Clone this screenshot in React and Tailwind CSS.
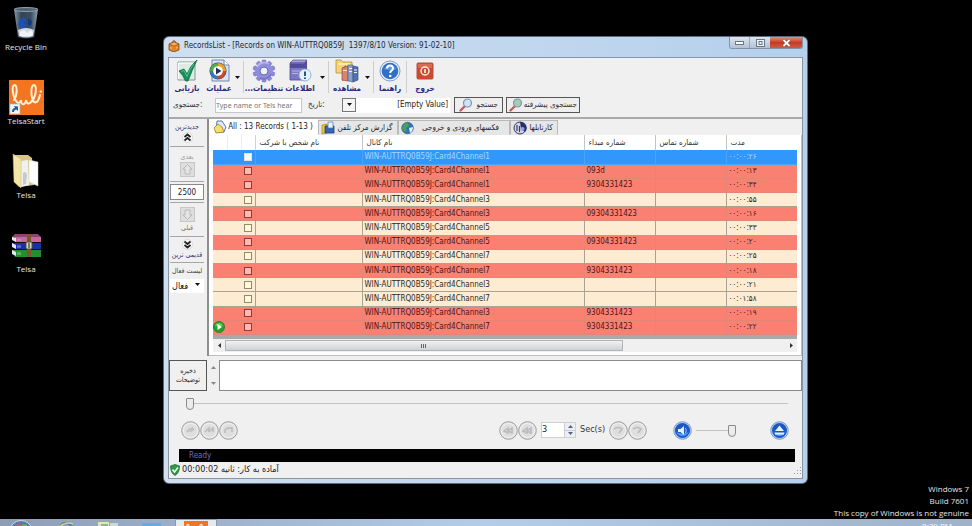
import React from "react";

const CHANNEL = "WIN-AUTTRQ0B59J:Card4Channel";

const records = [
  { kind: "selected", channel: "1", number: "", duration: "۰۰:۰۰:۲۶" },
  { kind: "red", channel: "1", number: "093d", duration: "۰۰:۰۰:۱۳" },
  { kind: "red", channel: "1", number: "9304331423", duration: "۰۰:۰۰:۳۴" },
  { kind: "cream", channel: "3", number: "", duration: "۰۰:۰۰:۵۵" },
  { kind: "red", channel: "3", number: "09304331423", duration: "۰۰:۰۰:۱۶" },
  { kind: "cream", channel: "5", number: "", duration: "۰۰:۰۰:۳۳" },
  { kind: "red", channel: "5", number: "09304331423", duration: "۰۰:۰۰:۲۰" },
  { kind: "cream", channel: "7", number: "", duration: "۰۰:۰۰:۲۵" },
  { kind: "red", channel: "7", number: "9304331423", duration: "۰۰:۰۰:۱۸" },
  { kind: "cream", channel: "3", number: "", duration: "۰۰:۰۰:۲۱" },
  { kind: "cream", channel: "7", number: "", duration: "۰۰:۰۱:۵۸" },
  { kind: "red", channel: "3", number: "9304331423", duration: "۰۰:۰۰:۱۹" },
  { kind: "red", channel: "7", number: "9304331423", duration: "۰۰:۰۰:۲۲", playing: true },
];

const rowStyles = {
  selected: "bg-[#3297fd] text-[#a9d8ff]",
  red: "bg-[#fa8072] text-[#4a1712]",
  cream: "bg-[#feecd2] text-[#2b2925]",
};

const cellStyles = {
  selected: "border-[#4ba3fb]",
  red: "border-[#e2867a]",
  cream: "border-[#aaa294]",
};

const boxStyles = {
  selected: "border-[#d8e2ea] bg-[#fdfbf0]",
  red: "border-[#8f3a34] bg-[#ffb9b0]",
  cream: "border-[#8f8c6c] bg-[#fff8dc]",
};

/* ---------- desktop icons ---------- */

function RecycleBinIcon() {
  return (
    <svg width="28" height="34" viewBox="0 0 28 34" aria-hidden="true">
      <defs>
        <linearGradient id="bin" x1="0" x2="1">
          <stop offset="0" stopColor="#8b9cab" />
          <stop offset=".3" stopColor="#324453" />
          <stop offset=".7" stopColor="#3b4e5e" />
          <stop offset="1" stopColor="#93a1ad" />
        </linearGradient>
      </defs>
      <path d="M2 3 L26 3 L22 31 Q14 34 6 31 Z" fill="url(#bin)" />
      <ellipse cx="14" cy="3.5" rx="12" ry="2" fill="#4f6373" stroke="#93a2ae" />
      <path d="M8 14 l4-3 2 3 -2 3 3 2 -2 4 -5 -1 -2-4z" fill="#1d4fb4" />
      <path d="M16 12 l4 3 -1 5 -3-1z" fill="#17377c" />
      <path d="M6 24 Q14 20 22 24 L21 30 Q14 33 7 30 Z" fill="#d4dbe0" />
      <path d="M8 26 l4-2 3 3 4-3 2 3 -1 3 H8z" fill="#f2f4f5" />
    </svg>
  );
}

function TelsaLogo({ size = 35, shortcut = true }) {
  return (
    <svg width={size} height={size} viewBox="0 0 35 35" aria-hidden="true">
      <rect width="35" height="35" fill="#f5741f" />
      <g fill="none" stroke="#fff0d8" strokeWidth="2" strokeLinecap="round">
        <path d="M5 20 C9 14 8 5 5.500 5 C2 6 4 18 8 22 Q10 25 12 20 Q12 25 15 24 Q17 23 17 20 Q18 25 21 23 C28 17 28 5 25 5 C21 6 22 18 25 22 Q29 24 31 15" />
        <path d="M31.500 11.500 h.6" />
      </g>
      {shortcut && (
        <g>
          <rect x="1" y="24" width="10" height="10" fill="#f2f6fa" stroke="#9fb0c0" strokeWidth=".6" />
          <path d="M3 32 Q3 28 6 28 L5 26 L9 26.500 L9 31 L7.500 29.500 Q5 29.500 5 32 Z" fill="#1d5aa5" />
        </g>
      )}
    </svg>
  );
}

function FolderIcon() {
  return (
    <svg width="28" height="36" viewBox="0 0 28 36" aria-hidden="true">
      <path d="M2 2 L16 2 L20 5 L22 32 L7 34 L2 28 Z" fill="#d9c77c" />
      <path d="M9 8 L16 7 L17 32 L9 34 Z" fill="#eef0f2" />
      <path d="M17 7 L26 9 L26 33 L17 29 Z" fill="#fdfdfd" stroke="#cfd3d6" strokeWidth=".5" />
      <path d="M1 1 L9 6 L9 35 L2 29 Z" fill="#f4e7ac" stroke="#c6b36a" strokeWidth=".5" />
      <path d="M11 20 q3 -3 4 2 l-1 9 -3 1z" fill="#c5c9cc" />
    </svg>
  );
}

function ArchiveIcon() {
  return (
    <svg width="31" height="25" viewBox="0 0 31 25" aria-hidden="true">
      <path d="M1 4 L4 1 H27 L30 4 V8 H4 Z" fill="#8d4470" />
      <path d="M4 4 H30 V9 H4 Z" fill="#c4689d" />
      <path d="M1 10 H30 V16 H4 Z" fill="#1b2fa8" />
      <path d="M1 17 H30 V24 H4 Z" fill="#1d9330" />
      <path d="M1 4 L5 5 V9 L1 7 Z M1 10 L5 12 V16 L1 14 Z M1 17 L5 19 V23 L1 21 Z" fill="#e8e4ec" />
      <path d="M5 9.500 H30 M5 16.500 H30" stroke="#111" strokeWidth="1" />
      <path d="M7 6 v2 M7 12 v3 M7 19 v3 M9 6 v2 M9 12 v3 M9 19 v3" stroke="#d9c9e0" strokeWidth=".7" />
      <rect x="16" y="1" width="4" height="23" fill="#7c5530" />
      <rect x="15" y="9" width="6" height="7" rx="1" fill="#d8d6d0" stroke="#5b4a33" />
      <path d="M18 10 v5" stroke="#555" strokeWidth="1.500" />
    </svg>
  );
}

/* ---------- toolbar icons, 24 x 24 ---------- */

function CheckPageIcon() {
  return (
    <svg width="24" height="24" viewBox="0 0 24 24" aria-hidden="true">
      <path d="M3 3 H20 V21 H3 Z" fill="#dcebe4" stroke="#7d9c90" />
      <path d="M3.500 20 V4 H19" fill="none" stroke="#fff" />
      <path d="M4 12 L9 10 L12 15 Q15 7 22 1 Q17 11 13 22 L10.500 22 Q8 16 4 12 Z" fill="#13905b" stroke="#0a6b42" strokeWidth=".8" />
      <path d="M6.500 12.500 L9 11.500 L12 17.500 Q15 9 19 5" fill="none" stroke="#66cf9d" strokeWidth=".8" />
    </svg>
  );
}

function MediaIcon() {
  return (
    <svg width="24" height="24" viewBox="0 0 24 24" aria-hidden="true">
      <path d="M5 1 H17 L22 6 V22 H5 Z" fill="#d8e4f5" stroke="#7388b2" />
      <path d="M17 1 V6 H22" fill="#fff" stroke="#7388b2" />
      <circle cx="11" cy="12" r="8.500" fill="#23446e" />
      <path d="M11 12 V4 A8 8 0 0 1 19 12 Z" fill="#e6a526" />
      <path d="M11 12 H19 A8 8 0 0 1 11 20 Z" fill="#c74a2b" />
      <path d="M11 12 V20 A8 8 0 0 1 3 12 Z" fill="#3779c4" />
      <path d="M11 12 H3 A8 8 0 0 1 11 4 Z" fill="#5bab40" />
      <circle cx="11" cy="12" r="4.800" fill="#fff" />
      <path d="M9 8.500 L14.500 12 L9 15.500 Z" fill="#20325c" />
    </svg>
  );
}

const gearTeeth = [0, 36, 72, 108, 144, 180, 216, 252, 288, 324];

function GearIcon() {
  return (
    <svg width="24" height="24" viewBox="0 0 24 24" aria-hidden="true">
      <g fill="#8d8bd8" stroke="#6967b8" strokeWidth=".5">
        {gearTeeth.map((a) => (
          <rect key={a} x="10" y="1" width="4" height="5" rx="1" transform={`rotate(${a} 12 12)`} />
        ))}
      </g>
      <circle cx="12" cy="12" r="8.800" fill="#8f8edb" />
      <path d="M5 8 A8 8 0 0 1 17 5" fill="none" stroke="#bdbcf0" strokeWidth="1.500" />
      <path d="M19 15 A8 8 0 0 1 8 19" fill="none" stroke="#7472c4" strokeWidth="1.500" />
      <circle cx="12" cy="12" r="4" fill="#efeff4" stroke="#6967b8" />
    </svg>
  );
}

function InfoIcon() {
  return (
    <svg width="24" height="24" viewBox="0 0 24 24" aria-hidden="true">
      <path d="M2 4 L5 1 H19 L16 4 Z" fill="#a7a3dd" stroke="#47418b" strokeWidth=".6" />
      <path d="M2 4 H16 V21 H2 Z" fill="#7d78c4" stroke="#4f4a94" strokeWidth=".8" />
      <path d="M16 4 L19 1 V18 L16 21 Z" fill="#544e9c" />
      <path d="M2 5 H16 V9 H2 Z" fill="#514b99" />
      <path d="M4 12 H12 M4 14.500 H10" stroke="#b9b5ea" />
      <circle cx="17" cy="16" r="6" fill="#e6f2fb" stroke="#8db4d6" />
      <path d="M17 12.500 V17 M17 18.500 V20" stroke="#20558e" strokeWidth="2" />
    </svg>
  );
}

function BooksIcon() {
  return (
    <svg width="26" height="24" viewBox="0 0 26 24" aria-hidden="true">
      <path d="M2 1 H7 L9 3 H18 V14 H2 Z" fill="#f3d479" stroke="#b58f33" strokeWidth=".8" />
      <path d="M4 5 H16" stroke="#fff0b8" strokeWidth="1.500" />
      <path d="M8 9 L12 6 V20 L8 22 Z" fill="#cf6a5a" />
      <path d="M8 9 L14 7 V22 L8 21 Z" fill="#d98470" stroke="#8a3b31" strokeWidth=".6" />
      <path d="M14 6 L19 6 V23 L14 22 Z" fill="#8f9fc4" stroke="#4d5d86" strokeWidth=".6" />
      <path d="M19 7 L24 8 V21 L19 23 Z" fill="#4e74b5" stroke="#2c4679" strokeWidth=".6" />
      <path d="M15 9.500 h3 M15 12.500 h3 M20 11 h3 M20 13.500 h3 M9 11.500 h4" stroke="#f1f3f9" strokeWidth="1" />
    </svg>
  );
}

function HelpIcon() {
  return (
    <svg width="22" height="24" viewBox="0 0 22 24" aria-hidden="true">
      <circle cx="11" cy="12" r="10" fill="#e8f0fb" stroke="#7f9fcb" />
      <circle cx="11" cy="12" r="8.300" fill="#2f6fc6" />
      <path d="M4 10 Q11 3 18 10 Q11 12 4 10" fill="#5a94de" />
      <path d="M8 9.500 Q8 6.500 11 6.500 Q14 6.500 14 9.300 Q14 11 12.300 11.900 Q11.200 12.500 11.200 14" fill="none" stroke="#fff" strokeWidth="2" />
      <circle cx="11.200" cy="17" r="1.300" fill="#fff" />
    </svg>
  );
}

function PowerIcon() {
  return (
    <svg width="18" height="24" viewBox="0 0 18 24" aria-hidden="true">
      <rect x="1" y="4" width="16" height="16" rx="1" fill="#d0482f" stroke="#b5523f" />
      <path d="M2 5 H16 V9 H2 Z" fill="#dd6a54" />
      <circle cx="9" cy="12" r="4" fill="none" stroke="#ffe9e2" strokeWidth="1.500" />
      <path d="M9 10 V14" stroke="#fff" strokeWidth="1.500" />
    </svg>
  );
}

/* ---------- small icons ---------- */

function BoxIcon() {
  return (
    <svg width="12" height="12" viewBox="0 0 12 12" aria-hidden="true">
      <path d="M1 4 L6 2 L11 4 V10 L6 12 L1 10 Z" fill="#e08427" stroke="#89460e" strokeWidth=".8" />
      <path d="M1 4 L6 6 L11 4 L6 2 Z" fill="#f4b264" stroke="#89460e" strokeWidth=".6" />
      <path d="M4 2.500 Q6 -1 8 2.500" fill="none" stroke="#89460e" />
      <path d="M3 7 V9 M8 8 L9.500 7.500" stroke="#ffd18a" />
    </svg>
  );
}

function MagnifierIcon({ tint = "#cfe3f6" }) {
  return (
    <svg width="14" height="14" viewBox="0 0 14 14" aria-hidden="true" className="shrink-0">
      <path d="M6 8 L1.500 12.500" stroke="#c45a64" strokeWidth="2.400" strokeLinecap="round" />
      <circle cx="8.500" cy="5" r="4" fill={tint} stroke="#7f93b3" strokeWidth="1.200" />
    </svg>
  );
}

function FolderTabIcon() {
  return (
    <svg width="14" height="14" viewBox="0 0 14 14" aria-hidden="true">
      <path d="M4 1 L9 1 L13 7 L11 12 L3 12 Z" fill="#dfe9fa" stroke="#36569f" strokeWidth=".8" />
      <path d="M1 8 L5 4 L9 7 L11 12 L3 13 Z" fill="#f6df6c" stroke="#9c7f20" strokeWidth=".8" />
    </svg>
  );
}

function PhoneReportIcon() {
  return (
    <svg width="14" height="14" viewBox="0 0 14 14" aria-hidden="true">
      <path d="M1 4 L6 3 V12 L1 13 Z" fill="#f0c63d" stroke="#9b7a1a" strokeWidth=".6" />
      <path d="M4 5 H13 V12 H4 Z" fill="#3567b7" stroke="#1e3f7d" strokeWidth=".8" />
      <path d="M7 1 H12 V7 H7 Z" fill="#eaf2fc" stroke="#4b75b5" strokeWidth=".7" />
    </svg>
  );
}

function GlobeIcon() {
  return (
    <svg width="13" height="14" viewBox="0 0 13 14" aria-hidden="true">
      <circle cx="6.500" cy="7" r="5.800" fill="#2b74b8" stroke="#1d4a7a" strokeWidth=".6" />
      <path d="M2 4 Q5 1 7 2 L8 5 L5 7 L6 11 Q3 11 1 8 Z" fill="#4da152" />
      <path d="M8 7 L12 6 Q12 10 9 12 Z" fill="#e5eef5" />
    </svg>
  );
}

function FilesIcon() {
  return (
    <svg width="14" height="14" viewBox="0 0 14 14" aria-hidden="true">
      <circle cx="7" cy="7" r="6" fill="#d4d6e6" stroke="#30375f" />
      <path d="M7 1 A6 6 0 0 1 12 11 L8 8 Z" fill="#27306c" />
      <path d="M4 4 V10 M6.500 5 V11" stroke="#433a58" strokeWidth="1.200" />
      <circle cx="9.500" cy="8" r="2" fill="#8fa5dd" />
    </svg>
  );
}

function DoubleChevron({ down = false }) {
  return (
    <svg width="11" height="11" viewBox="0 0 11 11" aria-hidden="true" className={down ? "rotate-180" : ""}>
      <circle cx="5.500" cy="5.500" r="5" fill="#fafafa" stroke="#c9c9c9" strokeWidth=".6" />
      <path d="M2.500 5 L5.500 2.500 L8.500 5 M2.500 8.500 L5.500 6 L8.500 8.500" fill="none" stroke="#222" strokeWidth="1.800" />
    </svg>
  );
}

function GhostArrow({ down = false }) {
  return (
    <svg width="15" height="15" viewBox="0 0 15 15" aria-hidden="true" className={down ? "rotate-180" : ""}>
      <rect x=".5" y=".5" width="14" height="14" fill="#dedede" stroke="#c6c6c6" />
      <path d="M7.500 2.500 L12 7 H10 V12 H5 V7 H3 Z" fill="#e4e4e4" stroke="#b0b0b0" strokeWidth=".8" />
    </svg>
  );
}

function PlayBadge() {
  return (
    <svg width="12" height="12" viewBox="0 0 12 12" aria-hidden="true">
      <circle cx="6" cy="6" r="5.600" fill="#27a02c" stroke="#167119" strokeWidth=".6" />
      <path d="M2 5 A4.200 4.200 0 0 1 10 5 Z" fill="#6fcb60" />
      <path d="M4.500 3 L9 6 L4.500 9 Z" fill="#fff" />
    </svg>
  );
}

function Caret({ className = "" }) {
  return (
    <svg width="5" height="3" viewBox="0 0 5 3" aria-hidden="true" className={className}>
      <path d="M0 0 H5 L2.500 3 Z" fill="currentColor" />
    </svg>
  );
}

const discGlyphs = {
  play: "M6 11 Q8 8 12 7 M9 11 L13 8",
  pause: "M5 11 L9 7 V11 M9 11 L13 7 V11",
  stop: "M6 12 V9 L9 7 H13 V11",
  back: "M5 10 L9 7 V12 Z M9 10 L13 7 V12 Z",
  forward: "M5 8 Q10 5 13 8 L10 12",
};

function DiscButton({ glyph, label }) {
  return (
    <button type="button" aria-label={label} className="h-[19px] w-[19px] rounded-full">
      <svg width="19" height="19" viewBox="0 0 19 19" aria-hidden="true">
        <circle cx="9.500" cy="9.500" r="8.800" fill="#e6e6e6" stroke="#9d9d9d" />
        <circle cx="9.500" cy="9.500" r="7" fill="#dedede" stroke="#f0f0f0" />
        <path d={discGlyphs[glyph]} fill="none" stroke="#bbbbbb" strokeWidth="1.500" />
      </svg>
    </button>
  );
}

function BlueDisc({ label, children }) {
  return (
    <button type="button" aria-label={label} className="h-[19px] w-[19px] rounded-full">
      <svg width="19" height="19" viewBox="0 0 19 19" aria-hidden="true">
        <circle cx="9.500" cy="9.500" r="8.800" fill="#b9d0ee" stroke="#7d9cc8" />
        <circle cx="9.500" cy="9.500" r="7.500" fill="#1d57c4" />
        <path d="M3.500 11 A6.500 6.500 0 0 0 15.500 11 Q10 14 3.500 11" fill="#4fa0ee" />
        {children}
      </svg>
    </button>
  );
}

/* ---------- building blocks ---------- */

function DesktopIcon({ label, children }) {
  return (
    <button type="button" className="flex h-[74px] w-13 flex-col items-center">
      <span className="flex h-9 items-center">{children}</span>
      <span className="leading-3 whitespace-nowrap text-[#e8e8e8]">{label}</span>
    </button>
  );
}

function Tool({ label, width, children }) {
  return (
    <button type="button" className={`flex ${width} shrink-0 flex-col items-center`}>
      {children}
      <span dir="rtl" className="text-[8px] leading-3 font-bold whitespace-nowrap text-[#28287c]">{label}</span>
    </button>
  );
}

function MenuArrow({ label }) {
  return (
    <button type="button" aria-label={label} className="flex h-9 w-2 shrink-0 items-center justify-center text-[#111]">
      <Caret />
    </button>
  );
}

function Separator() {
  return <span className="mx-[2px] h-8 w-px shrink-0 bg-[#cdcdcd]" />;
}

function Tab({ label, icon, width, active = false, rtl = true }) {
  const look = active
    ? "h-4 bg-white px-1"
    : "h-[15px] border border-[#b9b9b9] border-b-transparent bg-[#e6e6e6] px-[2px]";
  return (
    <button type="button" role="tab" aria-selected={active} className={`flex items-center text-[#222] ${look} ${width}`}>
      {icon}
      <span dir={rtl ? "rtl" : "ltr"} className="flex-1 text-center whitespace-nowrap">{label}</span>
    </button>
  );
}

const rangeStyle =
  "h-3 appearance-none bg-transparent " +
  "[&::-webkit-slider-runnable-track]:h-px [&::-webkit-slider-runnable-track]:bg-[#c2c2c2] " +
  "[&::-webkit-slider-thumb]:-mt-[5px] [&::-webkit-slider-thumb]:h-3 [&::-webkit-slider-thumb]:w-2 [&::-webkit-slider-thumb]:appearance-none " +
  "[&::-webkit-slider-thumb]:rounded-t-[1px] [&::-webkit-slider-thumb]:rounded-b-[4px] [&::-webkit-slider-thumb]:border [&::-webkit-slider-thumb]:border-[#8b8b8b] [&::-webkit-slider-thumb]:bg-[#ececec]";

function TitleBar() {
  return (
    <header className="flex h-5 items-start">
      <div className="flex h-[18px] min-w-0 flex-1 items-center gap-1 font-['DejaVu_Sans_Condensed','DejaVu_Sans',sans-serif] text-[8px] text-[#1d2733]">
        <BoxIcon />
        <h1 className="whitespace-pre">RecordsList - [Records on WIN-AUTTRQ0859J  1397/8/10 Version: 91-02-10]</h1>
      </div>
      <div className="flex h-3 overflow-hidden rounded-b-[3px] border border-t-0 border-[#8493a5] text-[#6a7683]">
        <button type="button" aria-label="Minimize" className="flex w-5 items-center justify-center border-r border-[#9aa8b8] bg-linear-to-b from-[#dde6f0] to-[#b2c2d4]">
          <svg width="9" height="4" viewBox="0 0 9 4" aria-hidden="true">
            <rect x=".5" y=".5" width="8" height="3" fill="#fff" stroke="currentColor" />
          </svg>
        </button>
        <button type="button" aria-label="Maximize" className="flex w-5 items-center justify-center bg-linear-to-b from-[#dde6f0] to-[#b2c2d4]">
          <svg width="9" height="8" viewBox="0 0 9 8" aria-hidden="true">
            <rect x=".5" y=".5" width="8" height="7" fill="#eef2f6" stroke="currentColor" />
            <rect x="3" y="2.500" width="3" height="3" fill="none" stroke="currentColor" />
          </svg>
        </button>
        <button type="button" aria-label="Close" className="flex w-8 items-center justify-center bg-linear-to-b from-[#dc8f80] via-[#c43b25] to-[#cc5a45]">
          <svg width="9" height="8" viewBox="0 0 9 8" aria-hidden="true">
            <path d="M1.500 1 L7.500 7 M7.500 1 L1.500 7" stroke="#8c4136" strokeWidth="3" />
            <path d="M1.500 1 L7.500 7 M7.500 1 L1.500 7" stroke="#fff" strokeWidth="1.800" />
          </svg>
        </button>
      </div>
    </header>
  );
}

function Toolbar() {
  return (
    <div role="toolbar" className="flex h-[38px] items-center">
      <Tool label="بازیابی" width="w-9"><CheckPageIcon /></Tool>
      <Tool label="عملیات" width="w-7"><MediaIcon /></Tool>
      <MenuArrow label="Operations menu" />
      <Separator />
      <Tool label="تنظیمات..." width="w-9"><GearIcon /></Tool>
      <Tool label="اطلاعات" width="w-9"><InfoIcon /></Tool>
      <MenuArrow label="Information menu" />
      <Separator />
      <Tool label="مشاهده" width="w-8"><BooksIcon /></Tool>
      <MenuArrow label="View menu" />
      <Separator />
      <Tool label="راهنما" width="w-7"><HelpIcon /></Tool>
      <Separator />
      <Tool label="خروج" width="w-8"><PowerIcon /></Tool>
    </div>
  );
}

function SearchBar() {
  return (
    <form className="flex h-[23px] items-center border-b-2 border-[#a9a9a9] pb-[3px] text-[#333]" onSubmit={(e) => e.preventDefault()}>
      <label htmlFor="query" className="w-[46px] pl-1 whitespace-nowrap">جستجوی:</label>
      <input
        id="query"
        placeholder="Type name or Tels hear"
        className="h-[15px] w-[87px] border border-[#c4c8cc] bg-white font-['Noto_Sans',sans-serif] text-[7px] placeholder:text-[#777]"
      />
      <label htmlFor="date" className="w-10 pl-[6px] whitespace-nowrap">تاریخ:</label>
      <div className="relative">
        <select id="date" className="block h-[15px] w-[108px] appearance-none bg-white pr-[2px] pl-4 text-right text-[#222] [text-align-last:right]">
          <option>[Empty Value]</option>
        </select>
        <span className="pointer-events-none absolute top-0 left-0 flex h-[14px] w-[14px] items-center justify-center border border-[#777] bg-[#f4f4f4] text-[#111]">
          <Caret />
        </span>
      </div>
      <button type="submit" className="ml-1 flex h-4 w-[49px] items-center justify-between border border-[#555] bg-[#eee] px-1">
        <MagnifierIcon />
        <span className="whitespace-nowrap">جستجو</span>
      </button>
      <button type="button" className="ml-[3px] flex h-4 w-[74px] items-center justify-between border border-[#555] bg-[#eee] px-[2px]">
        <MagnifierIcon tint="#a5cdb1" />
        <span className="whitespace-nowrap">جستجوی پیشرفته</span>
      </button>
    </form>
  );
}

function SideBar() {
  const block = "flex flex-col items-center justify-center border-b border-[#a6a6a6]";
  return (
    <nav className="flex w-9 shrink-0 flex-col px-px text-[7px] leading-[10px] text-[#33336e]">
      <button type="button" className={`${block} h-[28px]`}>
        <span>جدیدترین</span>
        <DoubleChevron />
      </button>
      <button type="button" className={`${block} h-[35px] text-[#999]`}>
        <span>بعدی</span>
        <GhostArrow />
      </button>
      <div className={`${block} h-[21px]`}>
        <input aria-label="Page size" defaultValue="2500" className="h-4 w-full border border-[#888] bg-white text-center text-[8px] text-[#222]" />
      </div>
      <button type="button" className={`${block} h-[34px] gap-px text-[#777]`}>
        <GhostArrow down />
        <span>قبلی</span>
      </button>
      <button type="button" className={`${block} h-[26px]`}>
        <DoubleChevron down />
        <span className="whitespace-nowrap">قدیمی ترین</span>
      </button>
      <label htmlFor="active" className="flex h-4 items-center justify-center whitespace-nowrap text-[#444]">لیست فعال</label>
      <div className="relative text-[#111]">
        <select id="active" className="block h-[14px] w-full appearance-none bg-white pl-[2px] text-[9px]">
          <option>فعال</option>
        </select>
        <Caret className="pointer-events-none absolute top-1 right-1" />
      </div>
    </nav>
  );
}

function RecordsTable() {
  return (
    <table className="h-[200px] w-full table-fixed border-collapse text-left">
      <colgroup>
        <col className="w-[14px]" />
        <col className="w-[14px]" />
        <col className="w-[14px]" />
        <col className="w-[107px]" />
        <col />
        <col className="w-[71px]" />
        <col className="w-[71px]" />
        <col className="w-[71px]" />
      </colgroup>
      <thead>
        <tr className="h-[15px] bg-white text-[#333]">
          <th aria-label="State" className="border-r border-[#ececec]" />
          <th aria-label="Flag" className="border-r border-[#ececec]" />
          <th aria-label="Select" className="border-r border-[#d0d0d0]" />
          {["نام شخص با شرکت", "نام کانال", "شماره مبداء", "شماره تماس", "مدت"].map((h) => (
            <th key={h} className="border-l border-[#c4c4c4] px-1 font-normal whitespace-nowrap">{h}</th>
          ))}
        </tr>
      </thead>
      <tbody>
        {records.map((r, i) => {
          const line = `border-b ${cellStyles[r.kind]}`;
          const cell = `border-b border-l px-[2px] whitespace-nowrap ${cellStyles[r.kind]}`;
          return (
            <tr key={i} className={`h-[14px] leading-3 ${rowStyles[r.kind]}`}>
              <td className={line}>{r.playing && <PlayBadge />}</td>
              <td className={line} />
              <td className={line}>
                <input
                  type="checkbox"
                  aria-label={`Select record ${i + 1}`}
                  className={`mx-auto block h-2 w-2 appearance-none border ${boxStyles[r.kind]}`}
                />
              </td>
              <td className={cell} />
              <td className={cell}>{CHANNEL + r.channel}</td>
              <td className={cell}>{r.number}</td>
              <td className={cell} />
              <td className={cell}>{r.duration}</td>
            </tr>
          );
        })}
      </tbody>
    </table>
  );
}

function HorizontalScroll() {
  return (
    <div className="flex h-[13px] items-center bg-[#f0f0f0] text-[#333]">
      <button type="button" aria-label="Scroll left" className="flex w-3 justify-center"><Caret className="rotate-90" /></button>
      <div className="flex-1">
        <div className="flex h-[11px] w-[71%] items-center justify-center gap-px border border-[#b4b4b4] bg-linear-to-b from-[#f2f2f2] to-[#cfd2d5]">
          <span className="h-1 w-px bg-[#666]" />
          <span className="h-1 w-px bg-[#666]" />
          <span className="h-1 w-px bg-[#666]" />
        </div>
      </div>
      <button type="button" aria-label="Scroll right" className="flex w-3 justify-center"><Caret className="-rotate-90" /></button>
    </div>
  );
}

function Player() {
  return (
    <section aria-label="Player">
      <div className="flex h-[25px] items-center pr-[14px] pl-[17px]">
        <input type="range" aria-label="Position" defaultValue="0" className={`w-full ${rangeStyle}`} />
      </div>
      <div className="flex h-7 items-center pr-[13px] pl-3">
        <DiscButton glyph="play" label="Play" />
        <DiscButton glyph="pause" label="Pause" />
        <DiscButton glyph="stop" label="Stop" />
        <div className="ml-auto flex items-center">
          <DiscButton glyph="back" label="Previous" />
          <DiscButton glyph="back" label="Rewind" />
          <div className="ml-1 flex h-4 w-[35px] border border-[#d0d0d0] bg-white text-[9px] text-[#222]">
            <input id="step" inputMode="numeric" defaultValue="3" className="w-[22px] min-w-0 bg-transparent" />
            <div className="flex flex-1 flex-col justify-around border-l border-[#c9ccd2] bg-[#eceef2] text-[#55617c]">
              <button type="button" aria-label="Increase step" className="flex flex-1 items-center justify-center border-b border-[#c9ccd2]"><Caret className="rotate-180" /></button>
              <button type="button" aria-label="Decrease step" className="flex flex-1 items-center justify-center"><Caret /></button>
            </div>
          </div>
          <label htmlFor="step" className="w-[33px] pl-1 text-[9px] text-[#333]">Sec(s)</label>
          <DiscButton glyph="forward" label="Forward" />
          <DiscButton glyph="forward" label="Next" />
        </div>
        <div className="ml-[26px] flex items-center">
          <BlueDisc label="Mute">
            <path d="M5 8 H7.500 L11 5 V14 L7.500 11 H5 Z" fill="#e4f1ff" />
            <path d="M12.500 7 Q14 9.500 12.500 12" fill="none" stroke="#9fcbff" />
          </BlueDisc>
        </div>
        <input type="range" aria-label="Volume" defaultValue="100" className={`ml-1 w-10 ${rangeStyle}`} />
        <div className="ml-[34px] flex">
          <BlueDisc label="Eject">
            <path d="M9.500 4.500 L14 10 H5 Z M5 11.500 H14 V13.500 H5 Z" fill="#e4f1ff" />
          </BlueDisc>
        </div>
      </div>
    </section>
  );
}

function RecordsWindow() {
  return (
    <main className="absolute top-9 right-[164px] left-[163px] overflow-hidden rounded-md border border-[#5b6b7d] bg-linear-to-r from-[#cfdff0] to-[#b5d0ec] px-1 pb-1">
      <TitleBar />
      <div className="border border-[#8795a5] bg-[#f0f0f0] font-['DejaVu_Sans_Condensed','DejaVu_Sans',sans-serif] text-[8px]">
        <Toolbar />
        <SearchBar />
        <div className="flex">
          <SideBar />
          <section className="ml-[2px] min-w-0 flex-1 border-l-2 border-[#8f8f8f]">
            <div role="tablist" className="flex h-4 items-end">
              <Tab label="All : 13 Records ( 1-13 )" icon={<FolderTabIcon />} width="w-[109px]" active rtl={false} />
              <Tab label="گزارش مرکز تلفن" icon={<PhoneReportIcon />} width="w-20" />
              <Tab label="فکسهای ورودی و خروجی" icon={<GlobeIcon />} width="w-28" />
              <Tab label="کارتابلها" icon={<FilesIcon />} width="w-12" />
            </div>
            <div className="border-r border-b border-[#bdbdbd] bg-white pr-1 pb-[3px] pl-1">
              <RecordsTable />
              <div className="h-1 bg-[#a9a9a9]" />
              <HorizontalScroll />
            </div>
          </section>
        </div>
        <div className="mt-1 flex h-[31px]">
          <button type="button" className="w-[38px] border border-[#555] bg-[#f0f0f0] text-[7px] leading-[9px] text-[#222]">ذخیره توضیحات</button>
          <div className="flex w-3 flex-col items-center justify-around text-[#888]">
            <Caret className="rotate-180" />
            <Caret />
          </div>
          <textarea aria-label="Notes" className="block h-full min-w-0 flex-1 resize-none border border-[#8a8a8a] bg-white" />
        </div>
        <Player />
        <div className="mr-[7px] ml-[10px] mt-[5px] flex h-[13px] items-center bg-black pl-[10px] text-[8px] text-[#6f6fc0]">Ready</div>
        <footer className="flex h-4 items-center gap-[2px] pl-px text-[9px] text-[#222]">
          <svg width="10" height="12" viewBox="0 0 10 12" aria-hidden="true">
            <path d="M5 .5 L9.500 2 Q9.500 9 5 11.500 Q.5 9 .5 2 Z" fill="#2f9a4a" stroke="#145e28" strokeWidth=".7" />
            <path d="M2.500 5.500 L4.500 8 L8 3.500" fill="none" stroke="#fff" strokeWidth="1.400" />
          </svg>
          <span dir="rtl" className="whitespace-nowrap">آماده به کار: ثانیه 00:00:02</span>
          <svg width="9" height="9" viewBox="0 0 9 9" aria-hidden="true" className="ml-auto">
            <path d="M7 1h1v1h-1z M4 4h1v1h-1z M7 4h1v1h-1z M1 7h1v1h-1z M4 7h1v1h-1z M7 7h1v1h-1z" fill="#999" />
          </svg>
        </footer>
      </div>
    </main>
  );
}

function Taskbar() {
  return (
    <footer className="flex h-[7px] shrink-0 items-start overflow-hidden bg-linear-to-r from-[#8e9db5] via-[#b3cde9] to-[#9fb2c8] font-['Open_Sans',sans-serif] text-[8px] text-white">
      <button type="button" aria-label="Start" className="ml-2">
        <svg width="26" height="26" viewBox="0 0 26 26" aria-hidden="true">
          <circle cx="13" cy="13" r="11.500" fill="#5c7ba8" stroke="#cfd9e6" />
          <path d="M7 7 q3 -3 6 -1 v6 h-6z" fill="#d0604a" />
          <path d="M14 5 q3 1 5 0 v6 h-5z" fill="#7aa85a" />
        </svg>
      </button>
      <button type="button" aria-label="Browser" className="ml-6">
        <svg width="16" height="20" viewBox="0 0 16 20" aria-hidden="true">
          <circle cx="8" cy="11" r="7" fill="none" stroke="#55829a" strokeWidth="2.500" />
          <path d="M1 8 Q8 2 15 5" fill="none" stroke="#d4d27a" strokeWidth="1.500" />
        </svg>
      </button>
      <button type="button" aria-label="Explorer" className="ml-6">
        <svg width="20" height="20" viewBox="0 0 20 20" aria-hidden="true">
          <path d="M0 3 H11 V18 H0 Z" fill="#e6e3b5" />
          <path d="M3 5 h7 v8 h-7z" fill="#8bb68a" />
          <path d="M12 4 H20 V18 H12 Z" fill="#cfd8cf" />
        </svg>
      </button>
      <button type="button" aria-label="Desktop" className="ml-6">
        <svg width="19" height="16" viewBox="0 0 19 16" aria-hidden="true">
          <rect y="4" width="19" height="12" fill="#6fa8dc" />
        </svg>
      </button>
      <button type="button" aria-label="Telsa" className="ml-[14px] flex h-8 w-[42px] justify-center border border-[#8899ad] bg-[#e6e9ee] pt-px">
        <TelsaLogo size={24} shortcut={false} />
      </button>
      <time className="mr-5 ml-auto leading-[14px] whitespace-nowrap">8:39 PM</time>
    </footer>
  );
}

export default function App() {
  return (
    <div className="relative flex h-screen flex-col overflow-hidden bg-black font-['Open_Sans','Noto_Sans',sans-serif] text-[8px]">
      <div className="flex min-h-0 flex-1 flex-col justify-between">
        <div className="flex w-13 flex-col pt-[5px]">
          <DesktopIcon label="Recycle Bin"><RecycleBinIcon /></DesktopIcon>
          <DesktopIcon label="TelsaStart"><TelsaLogo /></DesktopIcon>
          <DesktopIcon label="Telsa"><FolderIcon /></DesktopIcon>
          <DesktopIcon label="Telsa"><ArchiveIcon /></DesktopIcon>
        </div>
        <p className="pr-[3px] text-right leading-3 text-[#e4e4e4]">
          Windows 7<br />Build 7601<br />This copy of Windows is not genuine
        </p>
      </div>
      <RecordsWindow />
      <Taskbar />
    </div>
  );
}
